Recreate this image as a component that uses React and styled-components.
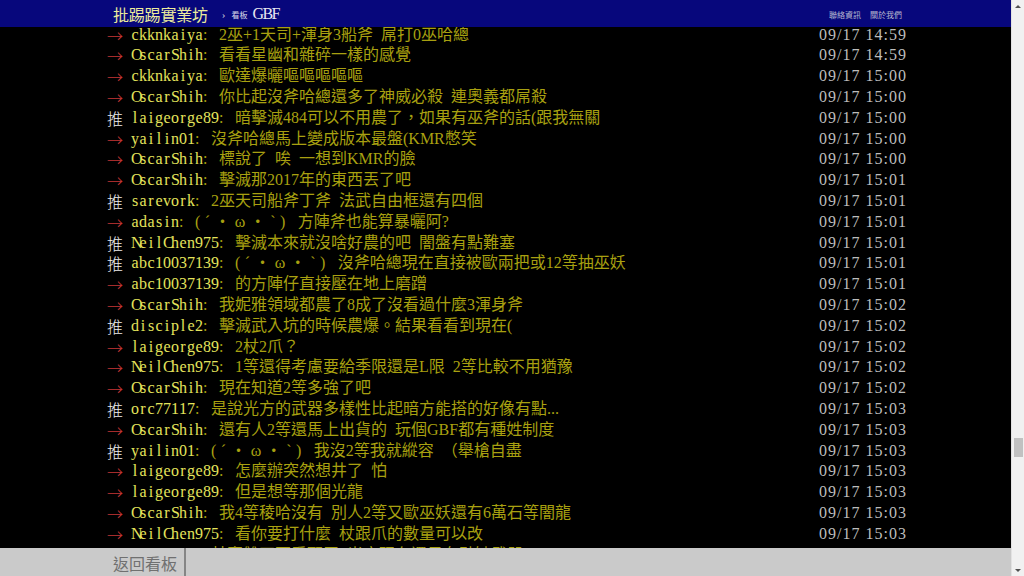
import React from "react";
import styled, { createGlobalStyle } from "styled-components";

const FACE = "(´・ω・`)";

const pushes = [
  { tag: "→", user: "ckknkaiya", text: "2巫+1天司+渾身3船斧 屌打0巫哈總", time: "09/17 14:59" },
  { tag: "→", user: "OscarShih", text: "看看星幽和雜碎一樣的感覺", time: "09/17 14:59" },
  { tag: "→", user: "ckknkaiya", text: "歐達爆曬嘔嘔嘔嘔嘔", time: "09/17 15:00" },
  { tag: "→", user: "OscarShih", text: "你比起沒斧哈總還多了神威必殺 連奧義都屌殺", time: "09/17 15:00" },
  { tag: "推", user: "laigeorge89", text: "暗擊滅484可以不用農了，如果有巫斧的話(跟我無關", time: "09/17 15:00" },
  { tag: "→", user: "yailin01", text: "沒斧哈總馬上變成版本最盤(KMR憋笑", time: "09/17 15:00" },
  { tag: "→", user: "OscarShih", text: "標說了 唉 一想到KMR的臉", time: "09/17 15:00" },
  { tag: "→", user: "OscarShih", text: "擊滅那2017年的東西丟了吧", time: "09/17 15:01" },
  { tag: "推", user: "sarevork", text: "2巫天司船斧丁斧 法武自由框還有四個", time: "09/17 15:01" },
  { tag: "→", user: "adasin", face: true, text: "方陣斧也能算暴曬阿?", time: "09/17 15:01" },
  { tag: "推", user: "NeilChen975", text: "擊滅本來就沒啥好農的吧 闇盤有點難塞", time: "09/17 15:01" },
  { tag: "推", user: "abc10037139", face: true, text: "沒斧哈總現在直接被歐兩把或12等抽巫妖", time: "09/17 15:01" },
  { tag: "→", user: "abc10037139", text: "的方陣仔直接壓在地上磨蹭", time: "09/17 15:01" },
  { tag: "→", user: "OscarShih", text: "我妮雅領域都農了8成了沒看過什麼3渾身斧", time: "09/17 15:02" },
  { tag: "推", user: "disciple2", text: "擊滅武入坑的時候農爆。結果看看到現在(", time: "09/17 15:02" },
  { tag: "→", user: "laigeorge89", text: "2杖2爪？", time: "09/17 15:02" },
  { tag: "→", user: "NeilChen975", text: "1等還得考慮要給季限還是L限 2等比較不用猶豫", time: "09/17 15:02" },
  { tag: "→", user: "OscarShih", text: "現在知道2等多強了吧", time: "09/17 15:02" },
  { tag: "推", user: "orc77117", text: "是說光方的武器多樣性比起暗方能搭的好像有點...", time: "09/17 15:03" },
  { tag: "→", user: "OscarShih", text: "還有人2等還馬上出貨的 玩個GBF都有種姓制度", time: "09/17 15:03" },
  { tag: "推", user: "yailin01", face: true, text: "我沒2等我就縱容 （舉槍自盡", time: "09/17 15:03" },
  { tag: "→", user: "laigeorge89", text: "怎麼辦突然想井了 怕", time: "09/17 15:03" },
  { tag: "→", user: "laigeorge89", text: "但是想等那個光龍", time: "09/17 15:03" },
  { tag: "→", user: "OscarShih", text: "我4等稜哈沒有 別人2等又歐巫妖還有6萬石等闇龍", time: "09/17 15:03" },
  { tag: "→", user: "NeilChen975", text: "看你要打什麼 杖跟爪的數量可以改", time: "09/17 15:03" },
  { tag: "→", user: "yailin01", text: "其實雙巫要看配置 光方現在還是有點缺武器", time: "09/17 15:03" },
];

const App = () => {
  return (
    <>
      <GlobalStyle />
      <Page>
        <Main>
          <TopBar>
            <Brand>批踢踢實業坊</Brand>
            <Crumb>›</Crumb>
            <BoardLink>
              <BoardLabel>看板</BoardLabel>GBF
            </BoardLink>
            <RightLinks>
              <SmallLink>聯絡資訊</SmallLink>
              <SmallLink>關於我們</SmallLink>
            </RightLinks>
          </TopBar>

          <Content>
            <PushList>
              {pushes.map((p, i) => (
                <Push key={p.user + i}>
                  <Tag $arrow={p.tag === "→"}>{p.tag}</Tag>
                  {/* half-width cells, like the terminal font */}
                  <UserId>
                    {[...p.user].map((c, j) => (
                      <Cell key={j}>{c}</Cell>
                    ))}
                  </UserId>
                  <PushText>
                    <Colon>:</Colon>
                    {p.face && <Face>{FACE}</Face>}
                    {p.face ? " " + p.text : p.text}
                  </PushText>
                  <IpDateTime>{p.time}</IpDateTime>
                </Push>
              ))}
            </PushList>
          </Content>

          <BottomBar>
            <BackLink>返回看板</BackLink>
            <Divider />
          </BottomBar>
        </Main>

        {/* fake page scrollbar */}
        <ScrollBar>
          <ScrollArrow $up />
          <Track>
            <Thumb style={{ marginTop: 426 }} />
          </Track>
          <ScrollArrow />
        </ScrollBar>
      </Page>
    </>
  );
};

export default App;

const GlobalStyle = createGlobalStyle`
  html, body {
    margin: 0;
    padding: 0;
    background: #000;
    overflow: hidden;
  }
  #root {
    height: 100vh;
  }
`;

const Page = styled.div`
  display: flex;
  height: 100vh;
  overflow: hidden;
`;

const Main = styled.div`
  flex: 1;
  display: flex;
  flex-direction: column;
  min-width: 0;
`;

const TopBar = styled.div`
  height: 27px;
  flex-shrink: 0;
  background: #07077c;
  display: flex;
  align-items: center;
  padding: 0 109px 0 113px;
  font-family: "Liberation Serif", "Noto Sans CJK TC", serif;
  white-space: nowrap;
`;

const Brand = styled.span`
  font-size: 16px;
  color: #ecec9c;
  letter-spacing: -0.2px;
`;

const Crumb = styled.span`
  font-size: 11px;
  color: #c8c8d8;
  margin: 1px 6px 0 14px;
`;

const BoardLink = styled.span`
  font-size: 16px;
  color: #e8e8f0;
  letter-spacing: -1.6px;
  display: flex;
  align-items: center;
`;

const BoardLabel = styled.span`
  font-size: 8px;
  letter-spacing: 0;
  color: #d8d8e8;
  margin: 2px 5px 0 0;
`;

const RightLinks = styled.div`
  margin-left: auto;
  display: flex;
  gap: 9px;
  padding-top: 1px;
`;

const SmallLink = styled.span`
  font-size: 8px;
  color: #b8b8d0;
`;

const Content = styled.div`
  flex: 1;
  overflow: hidden;
  background: #000;
`;

const PushList = styled.div`
  width: 800px;
  margin: -2.4px 0 0 107px;
  font-family: "Liberation Serif", "Noto Sans CJK TC", serif;
  font-size: 16px;
`;

const Push = styled.div`
  display: flex;
  height: 20.8px;
  line-height: 20.8px;
  white-space: pre;
`;

const Tag = styled.span`
  width: 24px;
  flex-shrink: 0;
  font-family: "Noto Sans CJK TC", sans-serif;
  font-weight: 300;
  color: ${(props) => (props.$arrow ? "#c43636" : "#eeeeee")};
`;

const UserId = styled.span`
  display: flex;
  color: #e4e45c;
`;

const Cell = styled.span`
  width: 8px;
  text-align: center;
`;

const PushText = styled.span`
  color: #a8a010;
  word-spacing: 4px;
`;

const Colon = styled.span`
  display: inline-block;
  width: 16px;
`;

const Face = styled.span`
  letter-spacing: 4.4px;
`;

const IpDateTime = styled.span`
  margin-left: auto;
  color: #bdbdbd;
  letter-spacing: 1px;
`;

const BottomBar = styled.div`
  height: 28px;
  flex-shrink: 0;
  background: #cacaca;
  display: flex;
  align-items: stretch;
`;

const BackLink = styled.span`
  width: 184px;
  box-sizing: border-box;
  padding: 4px 0 0 113px;
  font-family: "Noto Sans CJK TC", sans-serif;
  font-size: 16px;
  line-height: 22px;
  color: #707070;
  white-space: nowrap;
`;

const Divider = styled.div`
  width: 2px;
  background: #858585;
`;

const ScrollBar = styled.div`
  width: 12px;
  flex-shrink: 0;
  background: #f1f1f1;
  border-left: 1px solid #e2e2e2;
  display: flex;
  flex-direction: column;
  align-items: center;
`;

const ScrollArrow = styled.div`
  height: 12px;
  width: 100%;
  flex-shrink: 0;
  display: flex;
  justify-content: center;
  align-items: center;
  &::before {
    content: "";
    width: 0;
    height: 0;
    border-left: 3px solid transparent;
    border-right: 3px solid transparent;
    ${(props) =>
      props.$up
        ? "border-bottom: 3px solid #505050;"
        : "border-top: 3px solid #505050;"}
  }
`;

const Track = styled.div`
  flex: 1;
  width: 100%;
  display: flex;
  flex-direction: column;
  align-items: center;
`;

const Thumb = styled.div`
  width: 9px;
  height: 19px;
  background: #c1c1c1;
`;
